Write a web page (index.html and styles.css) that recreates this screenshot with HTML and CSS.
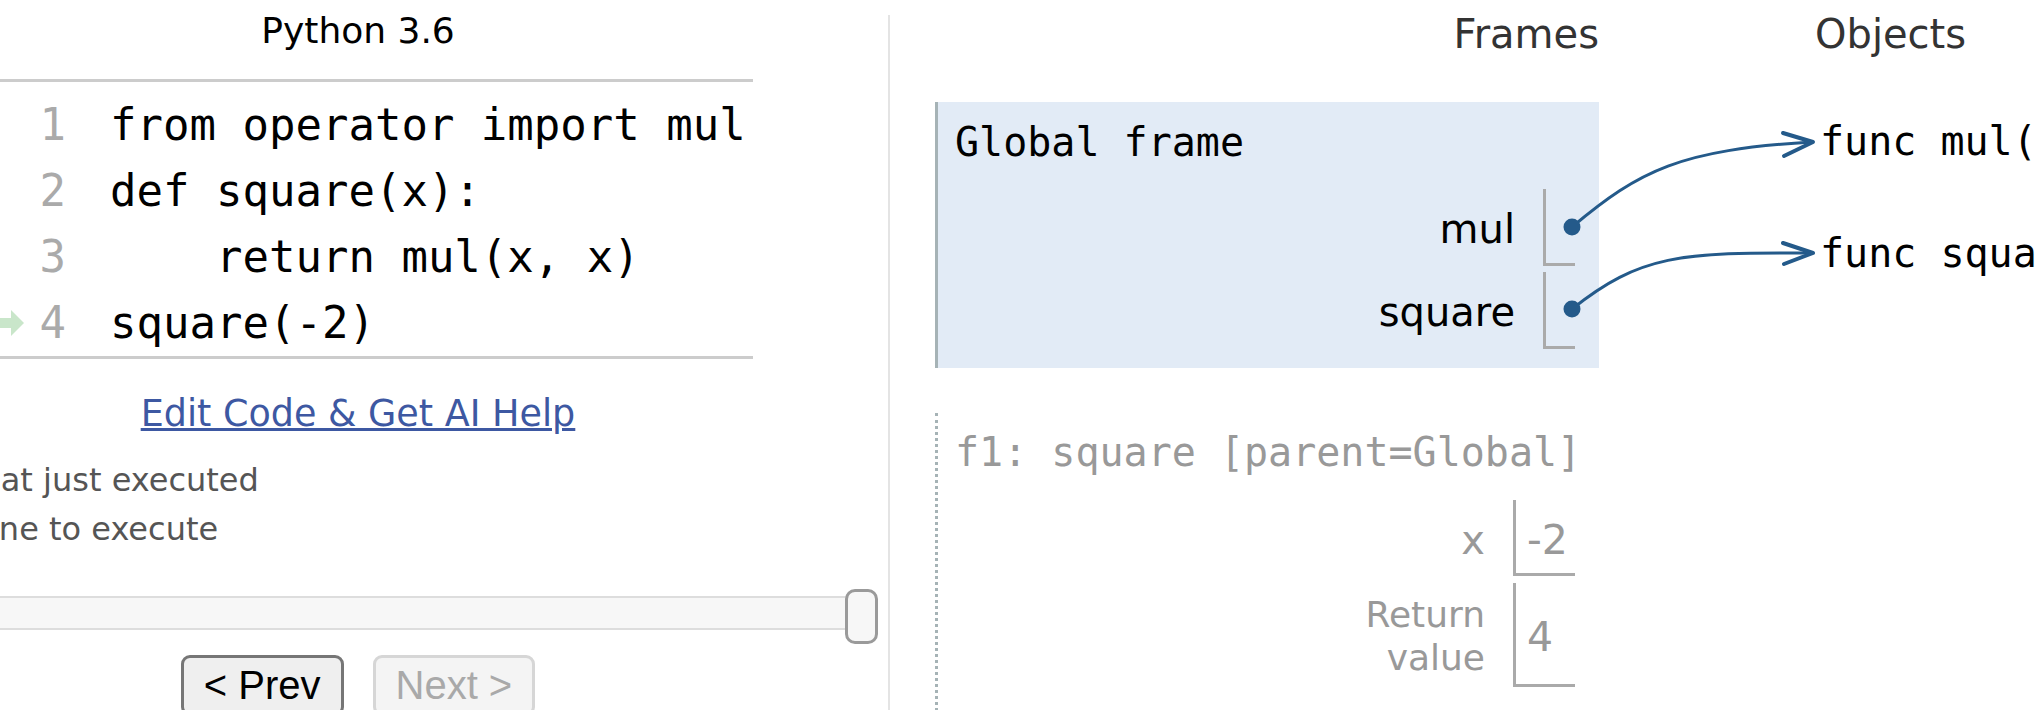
FILE: index.html
```html
<!DOCTYPE html>
<html lang="en">
<head>
<meta charset="utf-8">
<title>Python Tutor</title>
<link rel="stylesheet" href="styles.css">
</head>
<body>
<div class="viz">
  <div class="code-panel">
    <div class="lang">Python 3.6</div>
    <div class="code">
      <div class="row"><span class="gutter"></span><span class="lineno">1</span><span class="src">from operator import mul</span></div>
      <div class="row"><span class="gutter"></span><span class="lineno">2</span><span class="src">def square(x):</span></div>
      <div class="row"><span class="gutter"></span><span class="lineno">3</span><span class="src">    return mul(x, x)</span></div>
      <div class="row"><span class="gutter"><svg class="cur-arrow" width="40" height="26" viewBox="0 0 40 26"><rect x="0" y="8" width="29" height="10" fill="#c9e6ca"/><polygon points="27,0 40,13 27,26" fill="#c9e6ca"/></svg></span><span class="lineno">4</span><span class="src">square(-2)</span></div>
    </div>
    <div class="edit"><a href="#">Edit Code &amp; Get AI Help</a></div>
    <div class="legend">
      <div class="legend-row"><svg width="30" height="20" viewBox="0 0 30 20"><rect x="0" y="6" width="18" height="8" fill="#c9e6ca"/><polygon points="16,0 30,10 16,20" fill="#c9e6ca"/></svg><span>line that just executed</span></div>
      <div class="legend-row"><svg width="30" height="20" viewBox="0 0 30 20"><rect x="0" y="6" width="18" height="8" fill="#e93f34"/><polygon points="16,0 30,10 16,20" fill="#e93f34"/></svg><span>next line to execute</span></div>
    </div>
    <div class="slider"><div class="track"></div><div class="handle"></div></div>
    <div class="nav"><button class="btn">&lt; Prev</button><button class="btn" disabled>Next &gt;</button></div>
  </div>
  <div class="divider"></div>
  <div class="data-panel">
    <div class="frames-col">
      <div class="col-header frames-header">Frames</div>
      <div class="frame global">
        <div class="frame-header">Global frame</div>
        <div class="vars">
          <div class="var-name">mul</div><div class="var-val ptr"></div>
          <div class="var-name">square</div><div class="var-val ptr"></div>
        </div>
      </div>
      <div class="frame inactive">
        <div class="frame-header">f1: square [parent=Global]</div>
        <div class="vars">
          <div class="var-name">x</div><div class="var-val prim">-2</div>
          <div class="var-name retval">Return<br>value</div><div class="var-val prim">4</div>
        </div>
      </div>
    </div>
    <div class="heap-col">
      <div class="col-header">Objects</div>
      <div class="heap-obj first">func mul(a, b)</div>
      <div class="heap-obj second">func square(x) [parent=Global]</div>
    </div>
  </div>
  <svg class="arrows" width="2036" height="710" viewBox="0 0 2036 710">
    <g fill="none" stroke="#245a8a" stroke-linecap="round" stroke-linejoin="round">
      <path d="M1572 227 C1640 170 1680 150 1812 142" stroke-width="3"/>
      <path d="M1783 133 L1813 142 L1784 156" stroke-width="4"/>
      <path d="M1572 309 C1640 255 1680 252 1812 253" stroke-width="3"/>
      <path d="M1783 243 L1813 253 L1784 264" stroke-width="4"/>
    </g>
    <circle cx="1572" cy="227" r="8.5" fill="#245a8a"/>
    <circle cx="1572" cy="309" r="8.5" fill="#245a8a"/>
  </svg>
</div>
</body>
</html>
```
FILE: styles.css
```css
html, body {
  margin: 0;
  padding: 0;
  overflow: hidden;
  background: #ffffff;
}

.viz {
  position: relative;
  display: flex;
  width: 2036px;
}

/* ---------- left: code panel ---------- */
.code-panel {
  flex: 0 0 915px;
  margin-left: -37px;
  padding-top: 10px;
}

.lang {
  width: 790px;
  text-align: center;
  font: 36px/42px "DejaVu Sans", Verdana, sans-serif;
  color: #000;
}

.code {
  width: 790px;
  margin-top: 27px;
  border-top: 3px solid #cccccc;
  border-bottom: 3px solid #cccccc;
  padding-top: 10px;
  font: 44px/66px "DejaVu Sans Mono", monospace;
}

.row {
  display: flex;
  height: 66px;
}

.gutter {
  flex: none;
  width: 61px;
  display: flex;
  align-items: center;
  justify-content: flex-end;
}

.cur-arrow {
  display: block;
  flex: none;
}

.lineno {
  flex: none;
  width: 42px;
  text-align: right;
  color: #aaaaaa;
}

.src {
  margin-left: 44px;
  white-space: pre;
  color: #000;
}

.edit {
  width: 790px;
  margin-top: 33.5px;
  text-align: center;
  font: 36.5px/42px "DejaVu Sans", Verdana, sans-serif;
}

.edit a {
  color: #3d58a2;
  text-decoration: underline;
}

.legend {
  margin-top: 21px;
  margin-left: -103px;
  font: 32px/49px "DejaVu Sans", Verdana, sans-serif;
  color: #555555;
}

.legend-row {
  display: flex;
  align-items: center;
  gap: 10px;
  white-space: nowrap;
}

.slider {
  position: relative;
  margin-top: 42px;
  height: 34px;
}

.track {
  box-sizing: border-box;
  height: 34px;
  margin-right: 8px;
  border: 2px solid #dddddd;
  background: #f7f7f7;
}

.handle {
  position: absolute;
  right: 0;
  top: -7px;
  box-sizing: border-box;
  width: 33px;
  height: 55px;
  border: 3px solid #9a9a9a;
  border-radius: 10px;
  background: #f7f7f7;
}

.nav {
  width: 790px;
  margin-top: 25px;
  display: flex;
  justify-content: center;
  gap: 29px;
}

.btn {
  font: 40px "Liberation Sans", Arial, sans-serif;
  line-height: normal;
  padding: 5px 20px;
  margin: 0;
  border: 3px solid #767676;
  border-radius: 9px;
  background: #efefef;
  color: #000;
}

.btn:disabled {
  border-color: #d6d6d6;
  background: #f4f4f4;
  color: #a9a9a9;
}

/* ---------- divider ---------- */
.divider {
  flex: none;
  width: 2px;
  margin: 15px 0 0 10px;
  background: #e4e4e4;
}

/* ---------- right: data panel ---------- */
.data-panel {
  flex: none;
  display: flex;
  padding: 11px 0 0 45px;
}

.frames-col {
  flex: none;
  width: 664px;
}

.col-header {
  font: 40px/46px "DejaVu Sans", Verdana, sans-serif;
  color: #333333;
  white-space: nowrap;
}

.frames-header {
  text-align: right;
}

.frame {
  margin-top: 45px;
  padding: 17px 24px 19px 17px;
}

.frame.global {
  background: #e2ebf6;
  border-left: 3px solid #a6b3b6;
}

.frame.inactive {
  border-left: 3px dotted #a6b3b6;
  padding-top: 16px;
  padding-bottom: 60px;
  color: #999999;
}

.frame-header {
  font: 40px/46px "DejaVu Sans Mono", monospace;
  white-space: nowrap;
}

.vars {
  display: grid;
  grid-template-columns: auto auto;
  column-gap: 4px;
  row-gap: 6px;
  width: max-content;
  margin: 24px 0 0 auto;
  font: 40px/46px "DejaVu Sans", Verdana, sans-serif;
}

.frame.inactive .vars {
  margin-top: 25px;
  row-gap: 7px;
}

.var-name {
  display: flex;
  align-items: center;
  justify-content: flex-end;
  text-align: right;
  padding: 3px 24px 0 0;
}

.var-name.retval {
  font-size: 36px;
  line-height: 43px;
  padding-top: 10px;
  padding-bottom: 8px;
}

.var-val {
  box-sizing: border-box;
  display: flex;
  align-items: center;
  border-left: 3px solid #aaaaaa;
  border-bottom: 3px solid #aaaaaa;
}

.var-val.ptr {
  width: 32px;
  height: 77px;
}

.var-val.prim {
  width: 62px;
  min-height: 76px;
  padding: 6px 0 0 11px;
  font-size: 41px;
  line-height: normal;
}

.heap-col {
  flex: none;
  margin-left: 216px;
}

.heap-obj {
  padding-left: 5px;
  font: 40px/46px "DejaVu Sans Mono", monospace;
  white-space: nowrap;
  color: #000;
}

.heap-obj.first {
  margin-top: 61px;
}

.heap-obj.second {
  margin-top: 66px;
}

/* ---------- pointer arrows overlay ---------- */
.arrows {
  position: absolute;
  left: 0;
  top: 0;
  pointer-events: none;
}
```
